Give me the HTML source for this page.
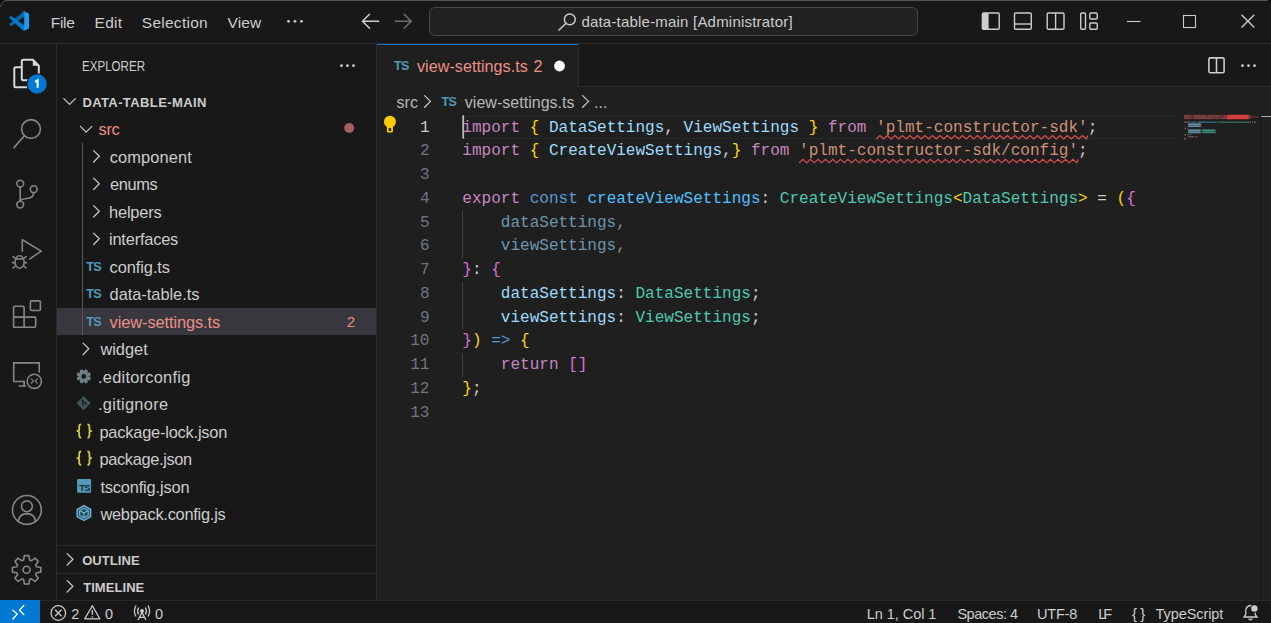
<!DOCTYPE html>
<html><head><meta charset="utf-8"><style>
html,body{margin:0;padding:0;}
body{width:1271px;height:623px;overflow:hidden;background:#181818;position:relative;font-family:"Liberation Sans",sans-serif;}
.a{position:absolute;}
.tx{position:absolute;white-space:pre;}
.cl{position:absolute;white-space:pre;font-family:"Liberation Mono",monospace;font-size:16.04px;line-height:23.75px;height:23.75px;color:#cccccc;}
</style></head><body>
<!-- title bar -->
<div class="a" style="left:0;top:0;width:1271px;height:43px;background:#181818"></div>
<div class="a" style="left:0;top:0;width:1271px;height:1px;background:#555555"></div>
<div class="a" style="left:0;top:43px;width:1271px;height:1px;background:#2b2b2b"></div>
<div class="a" style="left:428.8px;top:7px;width:486.8px;height:27px;border:1px solid #464646;border-radius:6px;background:#222222;box-sizing:content-box"></div>
<!-- activity bar border -->
<div class="a" style="left:56px;top:44px;width:1px;height:556px;background:#2b2b2b"></div>
<!-- sidebar -->
<div class="a" style="left:376px;top:44px;width:1px;height:556px;background:#2b2b2b"></div>
<div class="a" style="left:57px;top:307.8px;width:319px;height:27.3px;background:#37373d"></div>
<div class="a" style="left:82px;top:142.8px;width:1px;height:192.3px;background:#585858"></div>
<div class="a" style="left:57px;top:545px;width:319px;height:1px;background:#2b2b2b"></div>
<div class="a" style="left:57px;top:573px;width:319px;height:1px;background:#2b2b2b"></div>
<!-- editor -->
<div class="a" style="left:377px;top:44px;width:894px;height:556px;background:#1f1f1f"></div>
<div class="a" style="left:578px;top:44px;width:693px;height:42px;background:#181818"></div>
<div class="a" style="left:377px;top:86px;width:894px;height:1px;background:#2b2b2b"></div>
<div class="a" style="left:377px;top:44px;width:200.6px;height:43px;background:#1f1f1f"></div>
<div class="a" style="left:377px;top:44px;width:200.6px;height:1.2px;background:#0078d4"></div>
<div class="a" style="left:577.6px;top:44px;width:1px;height:42px;background:#2b2b2b"></div>
<!-- current line highlight -->
<div class="a" style="left:464px;top:115.5px;width:712px;height:21.6px;border-top:1px solid #282828;border-bottom:1px solid #282828"></div>
<div class="a" style="left:1176px;top:115.5px;width:84px;height:23.6px;"></div>
<!-- indent guides -->
<div class="a" style="left:462.3px;top:210.5px;width:1px;height:47.5px;background:#404040"></div>
<div class="a" style="left:462.3px;top:281.75px;width:1px;height:47.5px;background:#404040"></div>
<div class="a" style="left:462.3px;top:353px;width:1px;height:23.75px;background:#404040"></div>
<!-- overview ruler -->
<div class="a" style="left:1260px;top:115px;width:1px;height:485px;background:#151515"></div>
<div class="a" style="left:1261px;top:115.7px;width:10px;height:1.3px;background:#aaaaaa"></div>
<!-- status bar -->
<div class="a" style="left:0;top:600px;width:1271px;height:1px;background:#2b2b2b"></div>
<div class="a" style="left:0;top:600px;width:40px;height:23px;background:#0078d4"></div>
<svg class="a" style="left:0;top:0" width="1271" height="623" viewBox="0 0 1271 623">
<!-- window top-left rounded corner -->
<path d="M0 0 L7 0 Q1 1 0 7 Z" fill="#0c0c0c"/>
<path d="M0.5 7 Q1 1 7 0.5" stroke="#555555" stroke-width="1" fill="none"/><path d="M1271 0 V3 Q1270 0.8 1267 0 Z" fill="#0c0c0c"/>
<!-- vscode logo -->
<defs><clipPath id="vsc"><path d="M70.9119 99.3171C72.4869 99.9307 74.2828 99.8914 75.8725 99.1264L96.4608 89.2197C98.6242 88.1787 100 85.9892 100 83.5872V16.4133C100 14.0113 98.6243 11.8218 96.4609 10.7808L75.8725 0.873756C73.7862 -0.130129 71.3446 0.11576 69.5135 1.44695C69.252 1.63711 69.0028 1.84943 68.769 2.08341L29.3551 38.0415L12.1872 25.0096C10.589 23.7965 8.35363 23.8959 6.86933 25.2461L1.36303 30.2549C-0.452552 31.9064 -0.454633 34.7627 1.35853 36.417L16.2471 50.0001L1.35853 63.5832C-0.454633 65.2374 -0.452552 68.0938 1.36303 69.7453L6.86933 74.7541C8.35363 76.1043 10.589 76.2037 12.1872 74.9905L29.3551 61.9587L68.769 97.9167C69.3925 98.5406 70.1246 99.0104 70.9119 99.3171ZM75.0152 27.2989L45.1091 50.0001L75.0152 72.7012V27.2989Z"/></clipPath></defs>
<g transform="translate(9.2,11) scale(0.2)" clip-path="url(#vsc)">
<path d="M96.4614 10.7962L75.8569 0.875542C73.4719 -0.272773 70.6217 0.211611 68.75 2.08333L1.29858 63.5832C-0.515693 65.2373 -0.513607 68.0937 1.30308 69.7452L6.81272 74.754C8.29793 76.1042 10.5347 76.2036 12.1338 74.9905L93.3609 13.3699C96.086 11.3026 100 13.2462 100 16.6667V16.4275C100 14.0265 98.6246 11.8378 96.4614 10.7962Z" fill="#0065A9"/>
<path d="M96.4614 89.2038L75.8569 99.1245C73.4719 100.273 70.6217 99.7884 68.75 97.9167L1.29858 36.4169C-0.515693 34.7627 -0.513607 31.9063 1.30308 30.2548L6.81272 25.246C8.29793 23.8958 10.5347 23.7964 12.1338 25.0095L93.3609 86.6301C96.086 88.6974 100 86.7538 100 83.3334V83.5726C100 85.9735 98.6246 88.1622 96.4614 89.2038Z" fill="#007ACC"/>
<path d="M75.8578 99.1263C73.4721 100.274 70.6219 99.7885 68.75 97.9166C71.0564 100.223 75 98.5895 75 95.3278V4.67213C75 1.41039 71.0564 -0.223106 68.75 2.08329C70.6219 0.211402 73.4721 -0.273666 75.8578 0.873633L96.4587 10.7807C98.6234 11.8217 100 14.0112 100 16.4132V83.5871C100 85.9891 98.6234 88.1786 96.4586 89.2196L75.8578 99.1263Z" fill="#1F9CF0"/>
</g>
<!-- title menu dots -->
<g fill="#cccccc"><circle cx="288.5" cy="21.3" r="1.4"/><circle cx="295" cy="21.3" r="1.4"/><circle cx="301.5" cy="21.3" r="1.4"/></g>
<!-- back / forward arrows -->
<g stroke="#cccccc" stroke-width="1.5" fill="none" stroke-linecap="round">
  <path d="M362.5 21.3 H378.6 M369.5 14.3 L362.5 21.3 L369.5 28.3"/>
</g>
<g stroke="#6f6f6f" stroke-width="1.5" fill="none" stroke-linecap="round">
  <path d="M395.3 21.3 H411.2 M404.2 14.3 L411.2 21.3 L404.2 28.3"/>
</g>
<!-- search icon in command center -->
<g stroke="#cccccc" stroke-width="1.5" fill="none">
  <circle cx="569.8" cy="19.4" r="5.4"/>
  <path d="M565.8 23.5 L559 30" stroke-linecap="round"/>
</g>
<!-- layout icons -->
<g stroke="#cccccc" stroke-width="1.4" fill="none">
  <rect x="982.4" y="13" width="16.8" height="16.2" rx="1.2"/>
  <rect x="1014.5" y="13" width="16.8" height="16.2" rx="1.2"/>
  <path d="M1014.5 24 H1031.3"/>
  <rect x="1047.2" y="13" width="16.8" height="16.2" rx="1.2"/>
  <path d="M1055.6 13 V29.2"/>
  <rect x="1080.7" y="13" width="4.8" height="16.2" rx="1"/>
  <rect x="1089.8" y="13" width="7.4" height="6" rx="1"/>
  <rect x="1089.8" y="23" width="7.4" height="6.2" rx="1"/>
</g>
<rect x="982.4" y="13" width="6.2" height="16.2" fill="#cccccc"/>
<!-- window controls -->
<g stroke="#cccccc" stroke-width="1.1" fill="none">
  <path d="M1127 21.5 H1140.5"/>
  <rect x="1183.5" y="15.5" width="12" height="12"/>
  <path d="M1241.5 14.8 L1254.3 27.6 M1254.3 14.8 L1241.5 27.6" stroke-width="1.35"/>
</g>
<!-- split editor & more -->
<g stroke="#cccccc" stroke-width="1.4" fill="none">
  <rect x="1208.9" y="57.9" width="15.2" height="14.8" rx="1.4" stroke-width="1.6"/>
  <path d="M1216.5 57.7 V72.9" stroke-width="1.6"/>
</g>
<g fill="#cccccc"><circle cx="1242.5" cy="65.7" r="1.4"/><circle cx="1248.5" cy="65.7" r="1.4"/><circle cx="1254.5" cy="65.7" r="1.4"/></g>
<!-- explorer more -->
<g fill="#cccccc"><circle cx="341.5" cy="65.7" r="1.4"/><circle cx="347.5" cy="65.7" r="1.4"/><circle cx="353.5" cy="65.7" r="1.4"/></g>

<!-- ACTIVITY BAR -->
<!-- files icon -->
<g stroke="#d7d7d7" stroke-width="2" fill="none" stroke-linejoin="round">
  <path d="M32.8 59.8 H23.3 Q21.8 59.8 21.8 61.3 V78.7 Q21.8 80.2 23.3 80.2 H37.3 Q38.8 80.2 38.8 78.7 V65.8 Z"/>
  <path d="M21.8 67.2 H15.8 Q14.3 67.2 14.3 68.7 V85.8 Q14.3 87.3 15.8 87.3 H30"/>
</g>
<path d="M32.8 59.8 L38.8 65.8 H32.8 Z" fill="#d7d7d7"/>
<circle cx="37.1" cy="83.9" r="10.6" fill="#181818"/>
<circle cx="37.1" cy="83.9" r="9.6" fill="#0078d4"/>
<path d="M35 81.8 L37.6 80.3 V87.8" stroke="#ffffff" stroke-width="2" fill="none"/>
<!-- search -->
<g stroke="#868686" stroke-width="1.6" fill="none" stroke-linecap="round">
  <circle cx="31" cy="129" r="9.4"/>
  <path d="M24.4 135.8 L14 147.6"/>
</g>
<!-- source control -->
<g stroke="#868686" stroke-width="1.6" fill="none">
  <circle cx="20.2" cy="183.6" r="3.4"/>
  <circle cx="33.7" cy="189.2" r="3.4"/>
  <circle cx="20.2" cy="204.6" r="3.4"/>
  <path d="M20.2 187 V201.2"/>
  <path d="M33.7 192.6 Q33.7 197.6 28.5 198.3 L25 198.8 Q20.5 199.4 20.3 201.2"/>
</g>
<!-- run and debug -->
<g stroke="#868686" stroke-width="1.6" fill="none" stroke-linejoin="round">
  <path d="M22.3 251.7 V239.8 L41.2 251.1 L29.2 259.4"/>
  <ellipse cx="19.6" cy="262" rx="4.6" ry="6.2"/>
  <path d="M15 259 H24.2"/>
  <path d="M12.5 256.2 L15.2 258.2 M26.7 256.2 L24 258.2 M12 262.6 H15 M27.2 262.6 H24.2 M12.6 268.3 L15.4 266 M26.6 268.3 L23.8 266"/>
</g>
<!-- extensions -->
<g stroke="#868686" stroke-width="1.6" fill="none" stroke-linejoin="round">
  <path d="M13.6 327.2 V307.4 Q13.6 306.2 14.8 306.2 H22.9 Q24.1 306.2 24.1 307.4 V317.1 H34.5 Q35.7 317.1 35.7 318.3 V326 Q35.7 327.2 34.5 327.2 Z"/>
  <path d="M13.6 317.1 H24.1 V327.2"/>
  <rect x="30.4" y="300.9" width="10" height="9.6" rx="1.2"/>
</g>
<!-- remote explorer -->
<g stroke="#868686" stroke-width="1.6" fill="none">
  <path d="M25 381.5 H13.7 V362.9 H39.2 V372.6"/>
  <path d="M24.2 381.5 V386 M18.7 386 H26"/>
  <circle cx="34.3" cy="381.3" r="7.1"/>
  <path d="M31 378.7 L33.4 381.1 L31 383.5 M37.6 378.7 L35.2 381.1 L37.6 383.5" stroke-width="1.2"/>
</g>
<!-- accounts -->
<g stroke="#868686" stroke-width="1.6" fill="none">
  <circle cx="26.9" cy="509.9" r="14.4"/>
  <circle cx="26.9" cy="506.3" r="5.4"/>
  <path d="M18.2 521 Q19.5 513.8 26.9 513.6 Q34.3 513.8 35.6 521"/>
</g>
<!-- gear -->
<g transform="translate(26.6,569.8)">
  <path stroke="#868686" stroke-width="1.6" fill="none" stroke-linejoin="round" d="M9.74 -3.01 L14.22 -2.29 L14.22 2.29 L9.74 3.01 L9.02 4.76 L11.67 8.43 L8.43 11.67 L4.76 9.02 L3.01 9.74 L2.29 14.22 L-2.29 14.22 L-3.01 9.74 L-4.76 9.02 L-8.43 11.67 L-11.67 8.43 L-9.02 4.76 L-9.74 3.01 L-14.22 2.29 L-14.22 -2.29 L-9.74 -3.01 L-9.02 -4.76 L-11.67 -8.43 L-8.43 -11.67 L-4.76 -9.02 L-3.01 -9.74 L-2.29 -14.22 L2.29 -14.22 L3.01 -9.74 L4.76 -9.02 L8.43 -11.67 L11.67 -8.43 L9.02 -4.76 Z"/>
  <circle r="3.5" stroke="#868686" stroke-width="1.6" fill="none"/>
</g>

<g stroke="#c5c5c5" stroke-width="1.3" fill="none" stroke-linecap="round" stroke-linejoin="round">
<path d="M63.8 98.6 L69.6 104.4 L75.4 98.6"/>
<path d="M80.4 126.4 L86.1 132.1 L91.8 126.4"/>
<path d="M93.6 150.6 L99.3 156.3 L93.6 162.0"/>
<path d="M93.6 178.1 L99.3 183.8 L93.6 189.5"/>
<path d="M93.6 205.6 L99.3 211.3 L93.6 217.0"/>
<path d="M93.6 233.1 L99.3 238.8 L93.6 244.5"/>
<path d="M83.1 343.1 L88.8 348.8 L83.1 354.5"/>
<path d="M67.2 553.6 L72.9 559.3 L67.2 565"/>
<path d="M67.2 580.6 L72.9 586.3 L67.2 592"/>
<path d="M424.6 95.6 L430.5 101.4 L424.6 107.2"/>
<path d="M582.6 95.6 L588.5 101.4 L582.6 107.2"/>
</g>
<text x="86.2" y="270.6" font-family="Liberation Sans" font-weight="bold" font-size="12.6" fill="#519aba" letter-spacing="-0.6">TS</text>
<text x="86.2" y="298.1" font-family="Liberation Sans" font-weight="bold" font-size="12.6" fill="#519aba" letter-spacing="-0.6">TS</text>
<text x="86.2" y="325.6" font-family="Liberation Sans" font-weight="bold" font-size="12.6" fill="#519aba" letter-spacing="-0.6">TS</text>
<text x="393.9" y="69.6" font-family="Liberation Sans" font-weight="bold" font-size="12.6" fill="#519aba" letter-spacing="-0.6">TS</text>
<text x="441.4" y="105.5" font-family="Liberation Sans" font-weight="bold" font-size="12.6" fill="#519aba" letter-spacing="-0.6">TS</text>
<circle cx="349.2" cy="128" r="5" fill="#a35f59"/>
<circle cx="559.5" cy="66" r="5.4" fill="#ffffff"/>
<circle cx="389.9" cy="121.8" r="6" fill="#ffcc00"/>
<rect x="386.9" y="125.5" width="6" height="7" rx="1.3" fill="#ffcc00"/>
<rect x="388.6" y="128.2" width="2.6" height="2.8" fill="#1f1f1f"/>
<path d="M89.20 376.58 L90.96 377.80 L89.85 380.48 L87.74 380.09 L87.49 380.34 L87.88 382.45 L85.20 383.56 L83.98 381.80 L83.62 381.80 L82.40 383.56 L79.72 382.45 L80.11 380.34 L79.86 380.09 L77.75 380.48 L76.64 377.80 L78.40 376.58 L78.40 376.22 L76.64 375.00 L77.75 372.32 L79.86 372.71 L80.11 372.46 L79.72 370.35 L82.40 369.24 L83.62 371.00 L83.98 371.00 L85.20 369.24 L87.88 370.35 L87.49 372.46 L87.74 372.71 L89.85 372.32 L90.96 375.00 L89.20 376.22 Z" fill="#6d8086"/><circle cx="83.8" cy="376.4" r="2.3" fill="#181818"/>
<path d="M83.6 396.6 L90.2 403.2 L83.6 409.8 L77 403.2 Z" fill="#41535b" stroke="#41535b" stroke-width="1" stroke-linejoin="round"/>
<path d="M81.5 399.5 L86.5 404.5 M82.8 400.8 V406" stroke="#181818" stroke-width="1.1"/>


<rect x="77.1" y="479" width="14" height="13.8" rx="1" fill="#519aba"/>
<text x="79.2" y="491.4" font-family="Liberation Sans" font-weight="bold" font-size="9.4" fill="#1b2b34" letter-spacing="-0.7">TS</text>
<path d="M83.9 505.6 L90.6 509.3 V516.6 L83.9 520.3 L77.2 516.6 V509.3 Z" fill="#27485a" stroke="#6cb6d9" stroke-width="1.5" stroke-linejoin="round"/><path d="M83.9 508.2 L88.2 510.6 V515.4 L83.9 517.8 L79.6 515.4 V510.6 Z M79.6 510.6 L83.9 513 L88.2 510.6 M83.9 513 V517.8" fill="none" stroke="#6cb6d9" stroke-width="1.1" stroke-linejoin="round"/>
<g stroke="#ffffff" stroke-width="1.4" fill="none" stroke-linecap="round" stroke-linejoin="round"><path d="M12.9 610.2 L17.2 614 L12.9 619"/><path d="M23.8 605.6 L19.5 610.2 L23.8 614.6"/></g>
<g stroke="#cccccc" stroke-width="1.3" fill="none" stroke-linejoin="round">
<circle cx="58.3" cy="613" r="7.3"/><path d="M55.1 609.8 L61.5 616.2 M61.5 609.8 L55.1 616.2"/>
<path d="M92.3 605.8 L99.8 618.8 H84.8 Z"/><path d="M92.3 610 V614.8 M92.3 616.2 V617.4"/>
<path d="M142 612.5 L138 620 M142 612.5 L146 620 M139.5 617.3 H144.5"/><circle cx="142" cy="611" r="1.3" fill="#cccccc"/>
<path d="M138.6 607.5 Q136.7 611 138.6 614.5 M145.4 607.5 Q147.3 611 145.4 614.5 M136 605.5 Q132.8 611 136 616.5 M148 605.5 Q151.2 611 148 616.5"/>
</g>
<text x="1132.1" y="618.6" font-family="Liberation Sans" font-size="15" fill="#cccccc" letter-spacing="3.2">{}</text>
<g stroke="#cccccc" stroke-width="1.3" fill="none"><path d="M1244 617 H1257 L1255.2 614.5 V610.5 Q1255 606 1250.5 605.5 Q1246 606 1245.8 610.5 V614.5 Z"/><path d="M1248.6 618.8 Q1250.5 620.6 1252.4 618.8"/></g>
<circle cx="1254.4" cy="608.5" r="3.8" fill="#cccccc" stroke="#181818" stroke-width="1.2"/>
<path d="M876.20 139.00 L879.95 135.50 L883.70 139.00 L887.45 135.50 L891.20 139.00 L894.95 135.50 L898.70 139.00 L902.45 135.50 L906.20 139.00 L909.95 135.50 L913.70 139.00 L917.45 135.50 L921.20 139.00 L924.95 135.50 L928.70 139.00 L932.45 135.50 L936.20 139.00 L939.95 135.50 L943.70 139.00 L947.45 135.50 L951.20 139.00 L954.95 135.50 L958.70 139.00 L962.45 135.50 L966.20 139.00 L969.95 135.50 L973.70 139.00 L977.45 135.50 L981.20 139.00 L984.95 135.50 L988.70 139.00 L992.45 135.50 L996.20 139.00 L999.95 135.50 L1003.70 139.00 L1007.45 135.50 L1011.20 139.00 L1014.95 135.50 L1018.70 139.00 L1022.45 135.50 L1026.20 139.00 L1029.95 135.50 L1033.70 139.00 L1037.45 135.50 L1041.20 139.00 L1044.95 135.50 L1048.70 139.00 L1052.45 135.50 L1056.20 139.00 L1059.95 135.50 L1063.70 139.00 L1067.45 135.50 L1071.20 139.00 L1074.95 135.50 L1078.70 139.00 L1082.45 135.50 L1086.20 139.00 L1088.00 135.50" stroke="#e05252" stroke-width="1.1" fill="none"/>
<path d="M799.20 162.80 L802.95 159.30 L806.70 162.80 L810.45 159.30 L814.20 162.80 L817.95 159.30 L821.70 162.80 L825.45 159.30 L829.20 162.80 L832.95 159.30 L836.70 162.80 L840.45 159.30 L844.20 162.80 L847.95 159.30 L851.70 162.80 L855.45 159.30 L859.20 162.80 L862.95 159.30 L866.70 162.80 L870.45 159.30 L874.20 162.80 L877.95 159.30 L881.70 162.80 L885.45 159.30 L889.20 162.80 L892.95 159.30 L896.70 162.80 L900.45 159.30 L904.20 162.80 L907.95 159.30 L911.70 162.80 L915.45 159.30 L919.20 162.80 L922.95 159.30 L926.70 162.80 L930.45 159.30 L934.20 162.80 L937.95 159.30 L941.70 162.80 L945.45 159.30 L949.20 162.80 L952.95 159.30 L956.70 162.80 L960.45 159.30 L964.20 162.80 L967.95 159.30 L971.70 162.80 L975.45 159.30 L979.20 162.80 L982.95 159.30 L986.70 162.80 L990.45 159.30 L994.20 162.80 L997.95 159.30 L1001.70 162.80 L1005.45 159.30 L1009.20 162.80 L1012.95 159.30 L1016.70 162.80 L1020.45 159.30 L1024.20 162.80 L1027.95 159.30 L1031.70 162.80 L1035.45 159.30 L1039.20 162.80 L1042.95 159.30 L1046.70 162.80 L1050.45 159.30 L1054.20 162.80 L1057.95 159.30 L1061.70 162.80 L1065.45 159.30 L1069.20 162.80 L1072.95 159.30 L1076.70 162.80 L1078.30 159.30" stroke="#e05252" stroke-width="1.1" fill="none"/>
<rect x="462.3" y="115.3" width="1.8" height="23.3" fill="#bdbdbd"/>
<rect x="1184" y="114.7" width="43" height="4.6" fill="#5c2327"/><rect x="1227" y="114.7" width="21.7" height="4.6" fill="#d02525"/><rect x="1248.7" y="116.4" width="10" height="1.3" fill="#6e2a2a"/><rect x="1188" y="123.2" width="12.8" height="3.6" fill="#3d5563"/><rect x="1188" y="129" width="12.5" height="3.9" fill="#3d5563"/><rect x="1201.8" y="129" width="13.2" height="3.9" fill="#2c5a4a"/><rect x="1184.00" y="115.20" width="6.08" height="1.5" fill="#e8c8c8" opacity="0.22"/><rect x="1191.21" y="115.20" width="0.93" height="1.5" fill="#e8c8c8" opacity="0.22"/><rect x="1193.27" y="115.20" width="12.26" height="1.5" fill="#e8c8c8" opacity="0.22"/><rect x="1205.63" y="115.20" width="0.93" height="1.5" fill="#e8c8c8" opacity="0.22"/><rect x="1207.69" y="115.20" width="12.26" height="1.5" fill="#e8c8c8" opacity="0.22"/><rect x="1221.08" y="115.20" width="0.93" height="1.5" fill="#e8c8c8" opacity="0.22"/><rect x="1223.14" y="115.20" width="4.02" height="1.5" fill="#e8c8c8" opacity="0.22"/><rect x="1228.29" y="115.20" width="22.56" height="1.5" fill="#e8c8c8" opacity="0.22"/><rect x="1250.95" y="115.20" width="0.93" height="1.5" fill="#e8c8c8" opacity="0.22"/><rect x="1184.00" y="117.28" width="6.08" height="1.5" fill="#e8c8c8" opacity="0.22"/><rect x="1191.21" y="117.28" width="0.93" height="1.5" fill="#e8c8c8" opacity="0.22"/><rect x="1193.27" y="117.28" width="18.44" height="1.5" fill="#e8c8c8" opacity="0.22"/><rect x="1211.81" y="117.28" width="0.93" height="1.5" fill="#e8c8c8" opacity="0.22"/><rect x="1212.84" y="117.28" width="0.93" height="1.5" fill="#e8c8c8" opacity="0.22"/><rect x="1214.90" y="117.28" width="4.02" height="1.5" fill="#e8c8c8" opacity="0.22"/><rect x="1220.05" y="117.28" width="29.77" height="1.5" fill="#e8c8c8" opacity="0.22"/><rect x="1249.92" y="117.28" width="0.93" height="1.5" fill="#e8c8c8" opacity="0.22"/><rect x="1184.00" y="121.44" width="6.08" height="1.5" fill="#c586c0" opacity="0.42"/><rect x="1191.21" y="121.44" width="5.05" height="1.5" fill="#569cd6" opacity="0.42"/><rect x="1197.39" y="121.44" width="18.44" height="1.5" fill="#4fc1ff" opacity="0.42"/><rect x="1215.93" y="121.44" width="0.93" height="1.5" fill="#cccccc" opacity="0.42"/><rect x="1217.99" y="121.44" width="18.44" height="1.5" fill="#4ec9b0" opacity="0.42"/><rect x="1236.53" y="121.44" width="0.93" height="1.5" fill="#ffd700" opacity="0.42"/><rect x="1237.56" y="121.44" width="12.26" height="1.5" fill="#4ec9b0" opacity="0.42"/><rect x="1249.92" y="121.44" width="0.93" height="1.5" fill="#ffd700" opacity="0.42"/><rect x="1251.98" y="121.44" width="0.93" height="1.5" fill="#cccccc" opacity="0.42"/><rect x="1254.04" y="121.44" width="0.93" height="1.5" fill="#ffd700" opacity="0.42"/><rect x="1255.07" y="121.44" width="0.93" height="1.5" fill="#da70d6" opacity="0.42"/><rect x="1188.12" y="123.52" width="12.26" height="1.5" fill="#9cdcfe" opacity="0.42"/><rect x="1200.48" y="123.52" width="0.93" height="1.5" fill="#cccccc" opacity="0.42"/><rect x="1188.12" y="125.60" width="12.26" height="1.5" fill="#9cdcfe" opacity="0.42"/><rect x="1200.48" y="125.60" width="0.93" height="1.5" fill="#cccccc" opacity="0.42"/><rect x="1184.00" y="127.68" width="0.93" height="1.5" fill="#da70d6" opacity="0.42"/><rect x="1185.03" y="127.68" width="0.93" height="1.5" fill="#cccccc" opacity="0.42"/><rect x="1187.09" y="127.68" width="0.93" height="1.5" fill="#da70d6" opacity="0.42"/><rect x="1188.12" y="129.76" width="12.26" height="1.5" fill="#9cdcfe" opacity="0.42"/><rect x="1200.48" y="129.76" width="0.93" height="1.5" fill="#cccccc" opacity="0.42"/><rect x="1202.54" y="129.76" width="12.26" height="1.5" fill="#4ec9b0" opacity="0.42"/><rect x="1214.90" y="129.76" width="0.93" height="1.5" fill="#cccccc" opacity="0.42"/><rect x="1188.12" y="131.84" width="12.26" height="1.5" fill="#9cdcfe" opacity="0.42"/><rect x="1200.48" y="131.84" width="0.93" height="1.5" fill="#cccccc" opacity="0.42"/><rect x="1202.54" y="131.84" width="12.26" height="1.5" fill="#4ec9b0" opacity="0.42"/><rect x="1214.90" y="131.84" width="0.93" height="1.5" fill="#cccccc" opacity="0.42"/><rect x="1184.00" y="133.92" width="0.93" height="1.5" fill="#da70d6" opacity="0.42"/><rect x="1185.03" y="133.92" width="0.93" height="1.5" fill="#ffd700" opacity="0.42"/><rect x="1187.09" y="133.92" width="1.96" height="1.5" fill="#569cd6" opacity="0.42"/><rect x="1190.18" y="133.92" width="0.93" height="1.5" fill="#ffd700" opacity="0.42"/><rect x="1188.12" y="136.00" width="6.08" height="1.5" fill="#c586c0" opacity="0.42"/><rect x="1195.33" y="136.00" width="1.96" height="1.5" fill="#da70d6" opacity="0.42"/><rect x="1184.00" y="138.08" width="0.93" height="1.5" fill="#ffd700" opacity="0.42"/><rect x="1185.03" y="138.08" width="0.93" height="1.5" fill="#cccccc" opacity="0.42"/>
<path d="M81.2 424.3 Q79.2 424.3 79.2 426.5 V429.2 Q79.2 431.0 77.4 431.0 Q79.2 431.0 79.2 432.8 V435.5 Q79.2 437.7 81.2 437.7 M87.4 424.3 Q89.4 424.3 89.4 426.5 V429.2 Q89.4 431.0 91.2 431.0 Q89.4 431.0 89.4 432.8 V435.5 Q89.4 437.7 87.4 437.7" stroke="#cbcb41" stroke-width="1.8" fill="none" stroke-linejoin="round"/><path d="M81.2 451.5 Q79.2 451.5 79.2 453.7 V456.4 Q79.2 458.2 77.4 458.2 Q79.2 458.2 79.2 460.0 V462.7 Q79.2 464.9 81.2 464.9 M87.4 451.5 Q89.4 451.5 89.4 453.7 V456.4 Q89.4 458.2 91.2 458.2 Q89.4 458.2 89.4 460.0 V462.7 Q89.4 464.9 87.4 464.9" stroke="#cbcb41" stroke-width="1.8" fill="none" stroke-linejoin="round"/>
</svg>

<div id="m_file" class="tx" style="left:50.80px;top:15.10px;font-size:15.5px;line-height:15.5px;color:#cccccc;font-weight:normal;letter-spacing:-0.300px;">File</div>
<div id="m_edit" class="tx" style="left:94.60px;top:15.10px;font-size:15.5px;line-height:15.5px;color:#cccccc;font-weight:normal;letter-spacing:0.233px;">Edit</div>
<div id="m_sel" class="tx" style="left:141.80px;top:15.10px;font-size:15.5px;line-height:15.5px;color:#cccccc;font-weight:normal;letter-spacing:0.262px;">Selection</div>
<div id="m_view" class="tx" style="left:227.60px;top:15.10px;font-size:15.5px;line-height:15.5px;color:#cccccc;font-weight:normal;letter-spacing:0.100px;">View</div>
<div id="cc" class="tx" style="left:581.40px;top:14.30px;font-size:15px;line-height:15px;color:#cccccc;font-weight:normal;letter-spacing:0.203px;">data-table-main [Administrator]</div>
<div id="exp" class="tx" style="left:82.00px;top:58.80px;font-size:14.2px;line-height:14.2px;color:#cccccc;font-weight:normal;transform:scaleX(0.8155);transform-origin:0 0;">EXPLORER</div>
<div id="root" class="tx" style="left:82.40px;top:95.82px;font-size:13px;line-height:13px;color:#cccccc;font-weight:bold;letter-spacing:0.393px;">DATA-TABLE-MAIN</div>
<div id="row0" class="tx" style="left:98.60px;top:120.91px;font-size:16.4px;line-height:16.4px;color:#ec8f86;font-weight:normal;letter-spacing:-0.400px;">src</div>
<div id="row1" class="tx" style="left:109.80px;top:149.10px;font-size:16.4px;line-height:16.4px;color:#cccccc;font-weight:normal;letter-spacing:0.113px;">component</div>
<div id="row2" class="tx" style="left:110.00px;top:176.41px;font-size:16.4px;line-height:16.4px;color:#cccccc;font-weight:normal;letter-spacing:-0.350px;">enums</div>
<div id="row3" class="tx" style="left:109.00px;top:203.91px;font-size:16.4px;line-height:16.4px;color:#cccccc;font-weight:normal;letter-spacing:-0.167px;">helpers</div>
<div id="row4" class="tx" style="left:109.00px;top:231.41px;font-size:16.4px;line-height:16.4px;color:#cccccc;font-weight:normal;letter-spacing:-0.200px;">interfaces</div>
<div id="row5" class="tx" style="left:109.60px;top:258.91px;font-size:16.4px;line-height:16.4px;color:#cccccc;font-weight:normal;letter-spacing:-0.075px;">config.ts</div>
<div id="row6" class="tx" style="left:109.60px;top:286.41px;font-size:16.4px;line-height:16.4px;color:#cccccc;font-weight:normal;letter-spacing:-0.033px;">data-table.ts</div>
<div id="row7" class="tx" style="left:109.60px;top:313.91px;font-size:16.4px;line-height:16.4px;color:#ec8f86;font-weight:normal;letter-spacing:-0.093px;">view-settings.ts</div>
<div id="row8" class="tx" style="left:100.40px;top:341.41px;font-size:16.4px;line-height:16.4px;color:#cccccc;font-weight:normal;letter-spacing:-0.000px;">widget</div>
<div id="row9" class="tx" style="left:98.00px;top:368.91px;font-size:16.4px;line-height:16.4px;color:#cccccc;font-weight:normal;letter-spacing:0.250px;">.editorconfig</div>
<div id="row10" class="tx" style="left:98.00px;top:396.41px;font-size:16.4px;line-height:16.4px;color:#cccccc;font-weight:normal;letter-spacing:0.289px;">.gitignore</div>
<div id="row11" class="tx" style="left:99.40px;top:423.91px;font-size:16.4px;line-height:16.4px;color:#cccccc;font-weight:normal;letter-spacing:-0.200px;">package-lock.json</div>
<div id="row12" class="tx" style="left:99.40px;top:451.41px;font-size:16.4px;line-height:16.4px;color:#cccccc;font-weight:normal;letter-spacing:-0.345px;">package.json</div>
<div id="row13" class="tx" style="left:100.40px;top:478.91px;font-size:16.4px;line-height:16.4px;color:#cccccc;font-weight:normal;letter-spacing:-0.167px;">tsconfig.json</div>
<div id="row14" class="tx" style="left:100.40px;top:506.41px;font-size:16.4px;line-height:16.4px;color:#cccccc;font-weight:normal;letter-spacing:-0.250px;">webpack.config.js</div>
<div id="row_badge" class="tx" style="left:346.70px;top:314.41px;font-size:15px;line-height:15px;color:#ec8f86;font-weight:normal;letter-spacing:0.000px;">2</div>
<div id="outline" class="tx" style="left:82.20px;top:553.71px;font-size:13px;line-height:13px;color:#cccccc;font-weight:bold;letter-spacing:0.067px;">OUTLINE</div>
<div id="timeline" class="tx" style="left:83.20px;top:580.51px;font-size:13px;line-height:13px;color:#cccccc;font-weight:bold;letter-spacing:0.057px;">TIMELINE</div>
<div id="tab" class="tx" style="left:417.00px;top:58.00px;font-size:16.1px;line-height:16.1px;color:#ec8f86;font-weight:normal;letter-spacing:0.047px;">view-settings.ts</div>
<div id="tab2" class="tx" style="left:533.40px;top:58.00px;font-size:16.1px;line-height:16.1px;color:#ec8f86;font-weight:normal;letter-spacing:0.000px;">2</div>
<div id="bc_src" class="tx" style="left:396.60px;top:94.71px;font-size:16px;line-height:16px;color:#b8b8b8;font-weight:normal;letter-spacing:0.000px;">src</div>
<div id="bc_file" class="tx" style="left:464.80px;top:94.71px;font-size:16px;line-height:16px;color:#b8b8b8;font-weight:normal;letter-spacing:0.027px;">view-settings.ts</div>
<div id="bc_dots" class="tx" style="left:594.00px;top:94.71px;font-size:16px;line-height:16px;color:#b8b8b8;font-weight:normal;letter-spacing:0.000px;">...</div>
<div id="sb_2" class="tx" style="left:71.20px;top:606.61px;font-size:14.5px;line-height:14.5px;color:#cccccc;font-weight:normal;letter-spacing:0.000px;">2</div>
<div id="sb_0a" class="tx" style="left:105.00px;top:606.61px;font-size:14.5px;line-height:14.5px;color:#cccccc;font-weight:normal;letter-spacing:0.000px;">0</div>
<div id="sb_0b" class="tx" style="left:155.00px;top:606.61px;font-size:14.5px;line-height:14.5px;color:#cccccc;font-weight:normal;letter-spacing:0.000px;">0</div>
<div id="sb_ln" class="tx" style="left:866.80px;top:606.61px;font-size:14.5px;line-height:14.5px;color:#cccccc;font-weight:normal;letter-spacing:-0.050px;">Ln 1, Col 1</div>
<div id="sb_sp" class="tx" style="left:957.40px;top:606.61px;font-size:14.5px;line-height:14.5px;color:#cccccc;font-weight:normal;letter-spacing:-0.463px;">Spaces: 4</div>
<div id="sb_utf" class="tx" style="left:1037.00px;top:606.61px;font-size:14.5px;line-height:14.5px;color:#cccccc;font-weight:normal;letter-spacing:-0.175px;">UTF-8</div>
<div id="sb_lf" class="tx" style="left:1098.20px;top:606.61px;font-size:14.5px;line-height:14.5px;color:#cccccc;font-weight:normal;letter-spacing:-2.900px;">LF</div>
<div id="sb_ts" class="tx" style="left:1155.60px;top:606.61px;font-size:14.5px;line-height:14.5px;color:#cccccc;font-weight:normal;letter-spacing:-0.089px;">TypeScript</div>
<div class="cl" style="top:116.50px;left:462.30px"><span style="color:#c586c0">import</span> <span style="color:#ffd700">{</span> <span style="color:#9cdcfe">DataSettings</span><span style="color:#cccccc">, </span><span style="color:#9cdcfe">ViewSettings</span> <span style="color:#ffd700">}</span> <span style="color:#c586c0">from</span> <span class="sq"><span style="color:#ce9178">'plmt-constructor-sdk'</span></span><span style="color:#cccccc">;</span></div><div class="cl" style="top:116.50px;left:419.88px;color:#cccccc">1</div><div class="cl" style="top:140.25px;left:462.30px"><span style="color:#c586c0">import</span> <span style="color:#ffd700">{</span> <span style="color:#9cdcfe">CreateViewSettings</span><span style="color:#cccccc">,</span><span style="color:#ffd700">}</span> <span style="color:#c586c0">from</span> <span class="sq"><span style="color:#ce9178">'plmt-constructor-sdk/config'</span></span><span style="color:#cccccc">;</span></div><div class="cl" style="top:140.25px;left:419.88px;color:#6e7681">2</div><div class="cl" style="top:164.00px;left:462.30px"></div><div class="cl" style="top:164.00px;left:419.88px;color:#6e7681">3</div><div class="cl" style="top:187.75px;left:462.30px"><span style="color:#c586c0">export</span> <span style="color:#569cd6">const</span> <span style="color:#4fc1ff">createViewSettings</span><span style="color:#cccccc">: </span><span style="color:#4ec9b0">CreateViewSettings</span><span style="color:#ffd700">&lt;</span><span style="color:#4ec9b0">DataSettings</span><span style="color:#ffd700">&gt;</span><span style="color:#cccccc"> = </span><span style="color:#ffd700">(</span><span style="color:#da70d6">{</span></div><div class="cl" style="top:187.75px;left:419.88px;color:#6e7681">4</div><div class="cl" style="top:211.50px;left:462.30px">    <span style="opacity:.62"><span style="color:#9cdcfe">dataSettings</span><span style="color:#cccccc">,</span></span></div><div class="cl" style="top:211.50px;left:419.88px;color:#6e7681">5</div><div class="cl" style="top:235.25px;left:462.30px">    <span style="opacity:.62"><span style="color:#9cdcfe">viewSettings</span><span style="color:#cccccc">,</span></span></div><div class="cl" style="top:235.25px;left:419.88px;color:#6e7681">6</div><div class="cl" style="top:259.00px;left:462.30px"><span style="color:#da70d6">}</span><span style="color:#cccccc">: </span><span style="color:#da70d6">{</span></div><div class="cl" style="top:259.00px;left:419.88px;color:#6e7681">7</div><div class="cl" style="top:282.75px;left:462.30px">    <span style="color:#9cdcfe">dataSettings</span><span style="color:#cccccc">: </span><span style="color:#4ec9b0">DataSettings</span><span style="color:#cccccc">;</span></div><div class="cl" style="top:282.75px;left:419.88px;color:#6e7681">8</div><div class="cl" style="top:306.50px;left:462.30px">    <span style="color:#9cdcfe">viewSettings</span><span style="color:#cccccc">: </span><span style="color:#4ec9b0">ViewSettings</span><span style="color:#cccccc">;</span></div><div class="cl" style="top:306.50px;left:419.88px;color:#6e7681">9</div><div class="cl" style="top:330.25px;left:462.30px"><span style="color:#da70d6">}</span><span style="color:#ffd700">)</span> <span style="color:#569cd6">=&gt;</span> <span style="color:#ffd700">{</span></div><div class="cl" style="top:330.25px;left:410.25px;color:#6e7681">10</div><div class="cl" style="top:354.00px;left:462.30px">    <span style="color:#c586c0">return</span> <span style="color:#da70d6">[]</span></div><div class="cl" style="top:354.00px;left:410.25px;color:#6e7681">11</div><div class="cl" style="top:377.75px;left:462.30px"><span style="color:#ffd700">}</span><span style="color:#cccccc">;</span></div><div class="cl" style="top:377.75px;left:410.25px;color:#6e7681">12</div><div class="cl" style="top:401.50px;left:462.30px"></div><div class="cl" style="top:401.50px;left:410.25px;color:#6e7681">13</div>
</body></html>
